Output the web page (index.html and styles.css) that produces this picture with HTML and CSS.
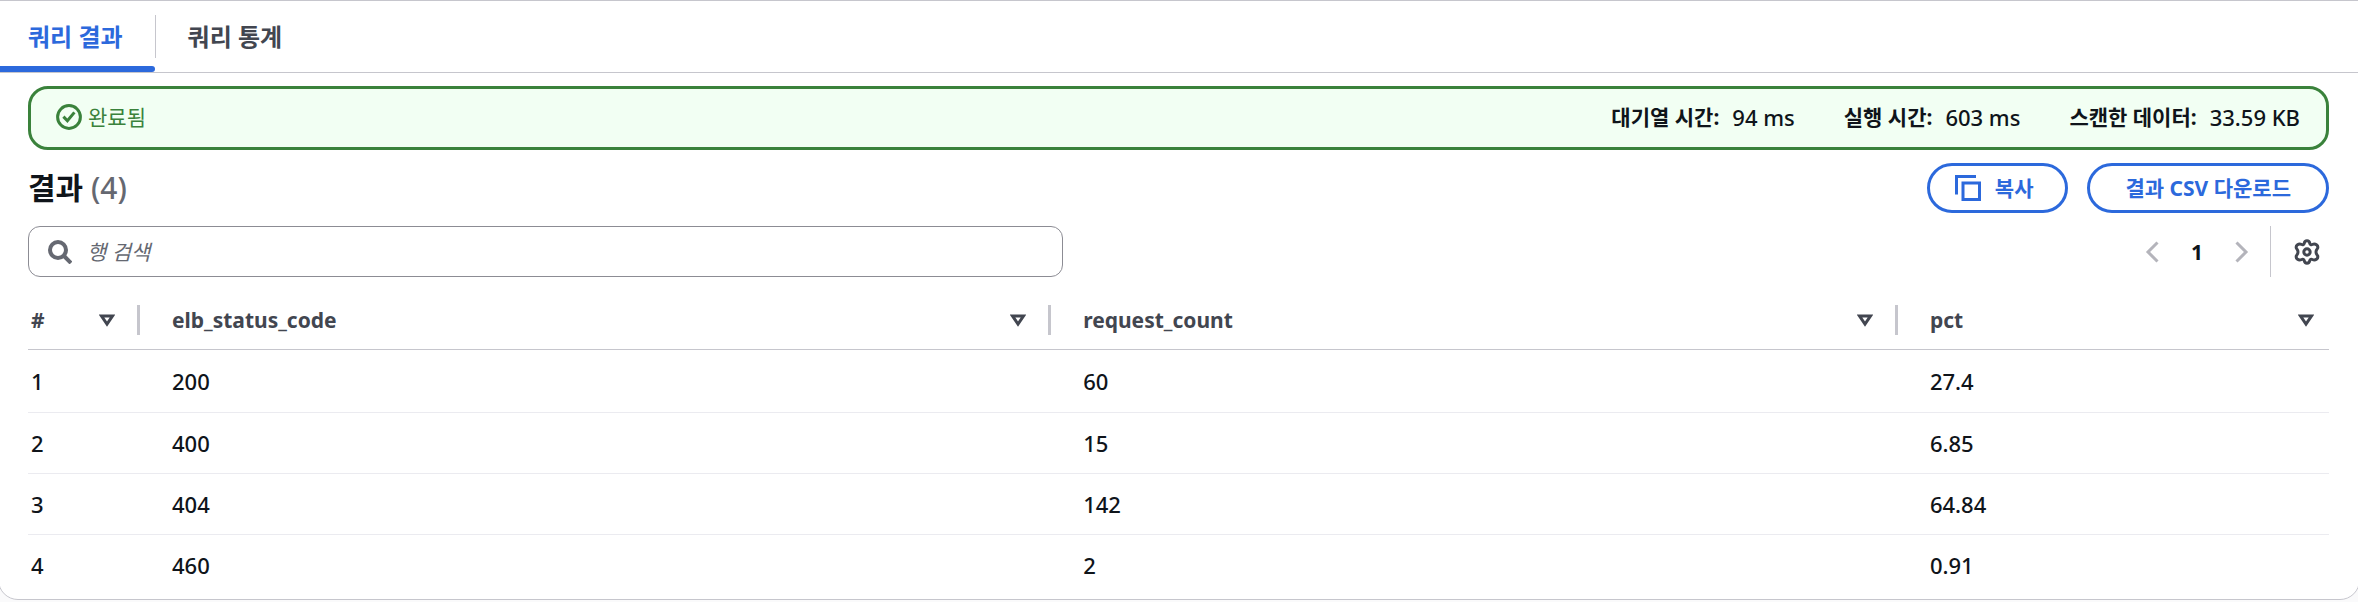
FILE: index.html
```
<!DOCTYPE html>
<html lang="ko">
<head>
    <meta charset="UTF-8">
    <meta name="viewport" content="width=device-width, initial-scale=1.0">
    <title>쿼리 결과</title>
    <link rel="stylesheet" href="styles.css">
</head>
<body>
    <div class="container">
        <div class="tabs" role="tablist">
            <button type="button" class="tab active" role="tab" aria-selected="true">쿼리 결과</button>
            <button type="button" class="tab" role="tab" aria-selected="false">쿼리 통계</button>
        </div>

        <div class="content">
            <!-- query status -->
            <div class="status">
                <div class="status-done">
                    <svg width="26" height="26" viewBox="0 0 26 26" fill="none" stroke="currentColor" stroke-width="3">
                        <circle cx="13" cy="13" r="11.4"/>
                        <path d="M7.4 12.6l4 4.2 7-8.4"/>
                    </svg>
                    <span>완료됨</span>
                </div>
                <dl class="stats">
                    <div class="stat"><dt>대기열 시간:</dt><dd>94 ms</dd></div>
                    <div class="stat"><dt>실행 시간:</dt><dd>603 ms</dd></div>
                    <div class="stat"><dt>스캔한 데이터:</dt><dd>33.59 KB</dd></div>
                </dl>
            </div>

            <div class="header">
                <h2>결과 <span class="count">(4)</span></h2>
                <div class="actions">
                    <button type="button" class="btn btn-copy">
                        <svg width="26" height="26" viewBox="0 0 26 26" fill="none" stroke="currentColor" stroke-width="3">
                            <path d="M1.5 19.5v-18h19.5"/>
                            <rect x="8" y="8" width="16.5" height="16.5"/>
                        </svg>
                        복사
                    </button>
                    <button type="button" class="btn">결과 CSV 다운로드</button>
                </div>
            </div>

            <div class="tools">
                <label class="search">
                    <svg width="24" height="24" viewBox="0 0 24 24" fill="none" stroke="currentColor" stroke-width="4">
                        <circle cx="10" cy="10" r="8"/>
                        <path d="M16 16l7 7"/>
                    </svg>
                    <input type="search" placeholder="행 검색" aria-label="행 검색">
                </label>
                <div class="pages">
                    <button type="button" class="icon-btn" aria-label="이전 페이지" disabled>
                        <svg width="14" height="22" viewBox="0 0 14 22" fill="none" stroke="currentColor" stroke-width="3">
                            <path d="M12.5 1.5L3 11l9.5 9.5"/>
                        </svg>
                    </button>
                    <button type="button" class="page-number" aria-current="page">1</button>
                    <button type="button" class="icon-btn" aria-label="다음 페이지" disabled>
                        <svg width="14" height="22" viewBox="0 0 14 22" fill="none" stroke="currentColor" stroke-width="3">
                            <path d="M1.5 1.5L11 11l-9.5 9.5"/>
                        </svg>
                    </button>
                    <div class="settings">
                        <button type="button" class="icon-btn" aria-label="기본 설정">
                            <svg width="26" height="26" viewBox="0 0 26 26" fill="none" stroke="currentColor" stroke-width="3" stroke-linejoin="round">
                                <path d="M10.3 4.2C10.8 1 15.2 1 15.7 4.2C16 5.5 17.2 6 18.3 5.5C21.5 4 24.4 6.5 23.7 9C23.4 10.2 22 10.7 22 13C22 15.3 23.4 15.8 23.7 17C24.4 19.5 21.5 22 18.3 20.5C17.2 20 16 20.5 15.7 21.8C15.2 25 10.8 25 10.3 21.8C10 20.5 8.8 20 7.7 20.5C4.5 22 1.6 19.5 2.3 17C2.6 15.8 4 15.3 4 13C4 10.7 2.6 10.2 2.3 9C1.6 6.5 4.5 4 7.7 5.5C8.8 6 10 5.5 10.3 4.2Z"/>
                                <circle cx="13" cy="13" r="3.2"/>
                            </svg>
                        </button>
                    </div>
                </div>
            </div>

            <table class="results">
                <colgroup>
                    <col class="col-index">
                    <col class="col-code">
                    <col class="col-count">
                    <col>
                </colgroup>
                <thead>
                    <tr>
                        <th scope="col"><button type="button" class="sort">#<svg width="16" height="13" viewBox="0 0 16 13" fill="none" stroke="currentColor" stroke-width="3"><path d="M2.5 2h11L8 10z"/></svg></button></th>
                        <th scope="col"><button type="button" class="sort">elb_status_code<svg width="16" height="13" viewBox="0 0 16 13" fill="none" stroke="currentColor" stroke-width="3"><path d="M2.5 2h11L8 10z"/></svg></button></th>
                        <th scope="col"><button type="button" class="sort">request_count<svg width="16" height="13" viewBox="0 0 16 13" fill="none" stroke="currentColor" stroke-width="3"><path d="M2.5 2h11L8 10z"/></svg></button></th>
                        <th scope="col"><button type="button" class="sort">pct<svg width="16" height="13" viewBox="0 0 16 13" fill="none" stroke="currentColor" stroke-width="3"><path d="M2.5 2h11L8 10z"/></svg></button></th>
                    </tr>
                </thead>
                <tbody>
                    <tr><td>1</td><td>200</td><td>60</td><td>27.4</td></tr>
                    <tr><td>2</td><td>400</td><td>15</td><td>6.85</td></tr>
                    <tr><td>3</td><td>404</td><td>142</td><td>64.84</td></tr>
                    <tr><td>4</td><td>460</td><td>2</td><td>0.91</td></tr>
                </tbody>
            </table>
        </div>
    </div>
</body>
</html>
```
FILE: styles.css
```
* {
    box-sizing: border-box;
}

body {
    font-family: "Noto Sans", "Noto Sans CJK KR", sans-serif;
    font-size: 21px;
    line-height: 30px;
    color: #0f141a;
    background-color: #fafafb;
    margin: 0;
    overflow-x: hidden;
}

button, input {
    font: inherit;
    color: inherit;
    background: none;
    border: 0;
    margin: 0;
    padding: 0;
}

button {
    cursor: pointer;
}

svg {
    display: block;
    flex: none;
}

/* the card's side borders stay just outside the window */
.container {
    margin: 0 -2px;
    background-color: #fff;
    border: 1px solid #c6c6cd;
    border-radius: 0 0 20px 20px;
}

/* Tabs */
.tabs {
    display: flex;
    height: 72px;
    border-bottom: 1px solid #c6c6cd;
}

.tab {
    position: relative;
    padding: 0 32px;
    font-size: 24px;
    font-weight: 700;
    color: #424650;
}

.tab.active {
    padding: 0 33px 0 29px;
    color: #2c69dc;
}

.tab.active::before {
    content: "";
    position: absolute;
    right: 0;
    top: 14px;
    bottom: 14px;
    width: 1px;
    background-color: #c6c6cd;
}

.tab.active::after {
    content: "";
    position: absolute;
    left: 0;
    right: 1px;
    bottom: 0;
    height: 6px;
    background-color: #2c69dc;
    border-radius: 0 3px 3px 0;
}

.content {
    padding: 13px 30px 4px 29px;
}

/* Status */
.status {
    display: flex;
    justify-content: space-between;
    align-items: center;
    height: 64px;
    padding: 0 26px 2px 25px;
    background-color: #f2fff3;
    border: 3px solid #3a823b;
    border-radius: 20px;
}

.status-done {
    display: flex;
    align-items: center;
    gap: 6px;
    color: #3a823b;
}

.stats {
    display: flex;
    gap: 49px;
    margin: 0;
}

.stat {
    display: flex;
    gap: 13px;
}

.stat dt {
    font-weight: 700;
}

.stat dd {
    margin: 0;
    font-size: 22px;
    font-weight: 500;
}

/* Header */
.header {
    display: flex;
    justify-content: space-between;
    align-items: center;
    margin: 13px 0;
}

h2 {
    margin: 0;
    font-size: 30px;
}

.count {
    font-weight: 500;
    color: #656871;
}

.actions {
    display: flex;
    gap: 19px;
}

.btn {
    display: flex;
    align-items: center;
    gap: 14px;
    height: 50px;
    padding: 0 35px;
    font-weight: 700;
    color: #2c69dc;
    border: 3px solid #2c69dc;
    border-radius: 25px;
}

.btn-copy {
    padding: 0 32px 0 25px;
}

/* Search and paging */
.tools {
    display: flex;
    justify-content: space-between;
    height: 51px;
}

.search {
    display: flex;
    align-items: center;
    gap: 15px;
    width: 45%;
    padding: 0 19px;
    color: #656871;
    border: 1px solid #8c8c94;
    border-radius: 12px;
}

.search input {
    flex: 1;
    outline: none;
}

.search input::placeholder {
    color: #656871;
    font-style: italic;
    opacity: 1;
}

.pages {
    display: flex;
    align-items: center;
}

.icon-btn {
    color: #424650;
}

.icon-btn:disabled {
    color: #b4b4bb;
}

.page-number {
    width: 76px;
    font-weight: 700;
}

.settings {
    display: flex;
    align-items: center;
    align-self: stretch;
    margin-left: 21px;
    padding: 0 9px 0 23px;
    border-left: 1px solid #c6c6cd;
}

/* Results */
.results {
    width: 100%;
    table-layout: fixed;
    border-collapse: separate;
    border-spacing: 0;
    font-size: 22px;
}

.col-index {
    width: 112px;
}

.col-code {
    width: 39.6%;
}

.col-count {
    width: 36.8%;
}

th {
    height: 73px;
    padding: 14px 0 0;
    text-align: left;
    vertical-align: top;
    color: #424650;
    border-bottom: 1px solid #c6c6cd;
}

.sort {
    display: flex;
    justify-content: space-between;
    align-items: center;
    width: 100%;
    height: 30px;
    margin-top: 14px;
    padding: 0 22px 0 32px;
    font-size: 21px;
    font-weight: 700;
    border-right: 3px solid #c6c6cd;
}

th:first-child .sort {
    padding-left: 3px;
}

th:last-child .sort {
    padding-right: 15px;
    border-right: 0;
}

td {
    height: 61px;
    padding: 0 32px;
    font-weight: 500;
    border-bottom: 1px solid #ebebf0;
}

tbody tr:first-child td {
    height: 63px;
}

tbody tr:last-child td {
    height: 60px;
    border-bottom: 0;
}

td:first-child {
    padding-left: 3px;
}
```
